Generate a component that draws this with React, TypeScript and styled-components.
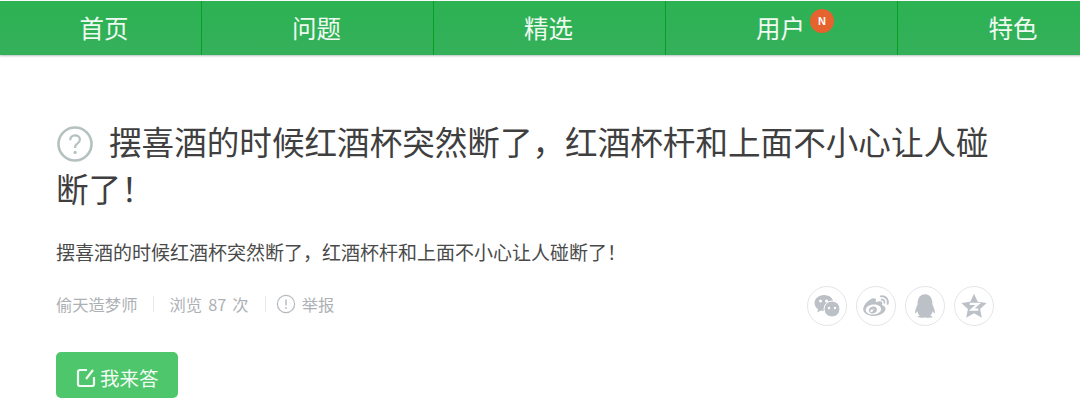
import React from "react";
import styled, { createGlobalStyle } from "styled-components";
import { RiWeiboFill, RiQqFill } from "react-icons/ri";

const GlobalStyle = createGlobalStyle`
  html, body {
    margin: 0;
    padding: 0;
    background: #fff;
    overflow: hidden;
    font-family: "Noto Sans CJK SC", "Liberation Sans", sans-serif;
  }
`;

const Page = styled.div`
  width: 1080px;
  height: 420px;
  overflow: hidden;
  padding-top: 1px;
  box-sizing: border-box;
`;

const NavBar = styled.nav`
  display: grid;
  grid-template-columns: 202px repeat(4, 232px);
  width: 1130px;
  height: 54px;
  background: linear-gradient(#2cb253, #35b05a);
  box-shadow: 0 1px 2px rgba(0, 40, 20, 0.3);
`;

const NavItem = styled.a<{ $first?: boolean; $last?: boolean }>`
  display: flex;
  align-items: center;
  justify-content: center;
  padding: 0 ${(p) => (p.$first ? "0" : "2px")} 2px ${(p) => (p.$first ? "7px" : "0")};
  border-right: ${(p) => (p.$last ? "none" : "1px solid #08a024")};
  color: #effaf1;
  font-size: 24.5px;
`;

const NavLabel = styled.span`
  position: relative;
`;

const Badge = styled.span`
  position: absolute;
  top: -1px;
  right: -29px;
  width: 24px;
  height: 24px;
  border-radius: 50%;
  background: #e6622f;
  color: #fff;
  font-size: 11px;
  font-weight: 700;
  line-height: 24px;
  text-align: center;
  font-family: "Liberation Sans", sans-serif;
`;

const Main = styled.main`
  padding: 62px 86px 0 56px;
`;

const Title = styled.h1`
  margin: 0;
  font-size: 32.6px;
  font-weight: 400;
  line-height: 47px;
  color: #3f3f3f;
`;

const QuestionIcon = styled.svg`
  width: 36px;
  height: 36px;
  margin: 0 16px 0 1px;
  vertical-align: -7px;
`;

const Summary = styled.p`
  margin: 24px 0 0;
  font-size: 19px;
  line-height: 34px;
  color: #4a4a4a;
`;

const MetaRow = styled.div`
  display: flex;
  align-items: center;
  justify-content: space-between;
  margin-top: 17px;
`;

const MetaList = styled.div`
  display: flex;
  align-items: center;
  margin-bottom: 4px;
  color: #adb1b5;
  font-size: 16.3px;
  word-spacing: 2.5px;
`;

const MetaItem = styled.span`
  display: flex;
  align-items: center;
`;

const ReportItem = styled(MetaItem)`
  gap: 6px;
  margin-left: -5px;
`;

const MetaSep = styled.span`
  width: 1px;
  height: 16px;
  margin: 0 15px 0 16px;
  background: #e6e8ea;
`;

const ShareList = styled.div`
  display: flex;
  gap: 9px;
  color: #bcc1c7;
`;

const ShareButton = styled.span`
  display: flex;
  align-items: center;
  justify-content: center;
  width: 38px;
  height: 38px;
  border: 1px solid #e3e5e8;
  border-radius: 50%;
  font-size: 28px;
`;

const AnswerButton = styled.button`
  display: flex;
  align-items: center;
  gap: 3px;
  width: 122px;
  height: 46px;
  margin-top: 26px;
  padding: 5px 0 0 19px;
  border: none;
  border-radius: 5px;
  background: #4ec66c;
  color: #f2fbf4;
  font-family: inherit;
  font-size: 19.5px;
`;

const navItems = ["首页", "问题", "精选", "用户", "特色"];

const WechatIcon = () => (
  <svg width="30" height="30" viewBox="0 0 30 30">
    <path d="M12 4C6.500 4 2.500 7.700 2.500 12c0 2.600 1.400 4.700 3.600 6.200l-.8 3.400 3.600-2c1 .3 2 .4 3.100.4 5.500 0 9.500-3.600 9.500-8S17.500 4 12 4z" fill="currentColor" />
    <circle cx="20" cy="18" r="8" fill="currentColor" stroke="#fff" strokeWidth="1" />
    <circle cx="8.500" cy="10" r="1.500" fill="#fff" />
    <circle cx="14.500" cy="10" r="1.500" fill="#fff" />
    <circle cx="17" cy="17" r="1.200" fill="#fff" />
    <circle cx="23" cy="17" r="1.200" fill="#fff" />
  </svg>
);

const QzoneIcon = () => (
  <svg width="30" height="30" viewBox="0 0 28 28">
    <path
      d="M14 2.500l3.500 7.600 8.300 1-6.100 5.600 1.600 8.200L14 20.800l-7.300 4.100 1.600-8.200-6.100-5.600 8.300-1z"
      fill="currentColor"
    />
    <path d="M10 12h8l-6.200 5.400H18" fill="none" stroke="#fff" strokeWidth="2" />
  </svg>
);

export default function App() {
  return (
    <Page>
      <GlobalStyle />
      <NavBar>
        {navItems.map((label, i) => (
          <NavItem key={label} $first={i === 0} $last={i === navItems.length - 1}>
            <NavLabel>
              {label}
              {label === "用户" && <Badge>N</Badge>}
            </NavLabel>
          </NavItem>
        ))}
      </NavBar>
      <Main>
        <Title>
          <QuestionIcon viewBox="0 0 36 36">
            <circle cx="18" cy="18" r="16.500" fill="none" stroke="#b5c0c0" strokeWidth="2.600" />
            <path
              d="M13.200 14.200c0-3 2.100-4.900 4.900-4.900s4.800 1.800 4.800 4.300c0 2-1 3-2.600 4.100-1.500 1-2.200 1.900-2.200 3.600v.7"
              fill="none"
              stroke="#b5c0c0"
              strokeWidth="2.200"
            />
            <circle cx="18.100" cy="26.400" r="1.600" fill="#b5c0c0" />
          </QuestionIcon>
          摆喜酒的时候红酒杯突然断了，红酒杯杆和上面不小心让人碰断了！
        </Title>
        <Summary>摆喜酒的时候红酒杯突然断了，红酒杯杆和上面不小心让人碰断了！</Summary>
        <MetaRow>
          <MetaList>
            <MetaItem>偷天造梦师</MetaItem>
            <MetaSep />
            <MetaItem>浏览 87 次</MetaItem>
            <MetaSep />
            <ReportItem>
              <svg width="20" height="20" viewBox="0 0 20 20">
                <circle cx="10" cy="10" r="8.600" fill="none" stroke="#b5b9bd" strokeWidth="1.200" />
                <path d="M10 5.500v6" stroke="#b5b9bd" strokeWidth="1.400" />
                <circle cx="10" cy="14" r="0.900" fill="#b5b9bd" />
              </svg>
              举报
            </ReportItem>
          </MetaList>
          <ShareList>
            <ShareButton>
              <WechatIcon />
            </ShareButton>
            <ShareButton>
              <RiWeiboFill />
            </ShareButton>
            <ShareButton>
              <RiQqFill />
            </ShareButton>
            <ShareButton>
              <QzoneIcon />
            </ShareButton>
          </ShareList>
        </MetaRow>
        <AnswerButton>
          <svg width="22" height="22" viewBox="0 0 22 22" fill="none" stroke="#f2fbf4" strokeWidth="2.200">
            <path d="M12 3H5a2 2 0 0 0-2 2v12a2 2 0 0 0 2 2h12a2 2 0 0 0 2-2v-7" />
            <path d="M11 12l7-9" />
          </svg>
          我来答
        </AnswerButton>
      </Main>
    </Page>
  );
}
